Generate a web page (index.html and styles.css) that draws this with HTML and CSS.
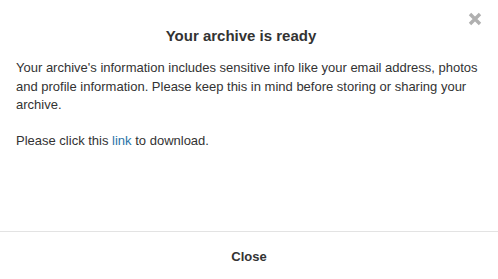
FILE: index.html
```html
<!DOCTYPE html>
<html>
<head>
<meta charset="utf-8">
<link rel="stylesheet" href="styles.css">
</head>
<body>
<div class="dialog">
  <button class="close-x" aria-label="Close">
    <svg width="14" height="14" viewBox="0 0 14 14"><path d="M2 2 L12 12 M12 2 L2 12" stroke="#b0b0b0" stroke-width="3.4" stroke-linecap="butt"/></svg>
  </button>
  <div class="body">
    <h1 class="title">Your archive is ready</h1>
    <p class="text">Your archive's information includes sensitive info like your email address, photos and profile information. Please keep this in mind before storing or sharing your archive.</p>
    <p class="text">Please click this <a href="#" class="link">link</a> to download.</p>
  </div>
  <div class="footer">
    <button class="close-btn">Close</button>
  </div>
</div>
</body>
</html>
```

FILE: styles.css
```css
html, body {
  margin: 0;
  padding: 0;
  background: #fff;
}
body {
  font-family: "Liberation Sans", Arial, sans-serif;
  color: #333;
}
.dialog {
  position: relative;
  width: 498px;
  height: 279px;
  display: flex;
  flex-direction: column;
}
.close-x {
  position: absolute;
  top: 12px;
  right: 16px;
  border: 0;
  background: none;
  padding: 0;
  width: 14px;
  height: 14px;
  cursor: pointer;
}
.close-x svg { display: block; }
.body {
  flex: 1;
  padding: 0 16px;
}
.title {
  margin: 27px 0 14px;
  font-size: 15px;
  font-weight: bold;
  text-align: center;
  line-height: 18px;
  padding-right: 16px;
}
.text {
  margin: 0 0 17px;
  font-size: 13px;
  line-height: 18.6px;
}
.link {
  color: #2a73a8;
  text-decoration: none;
}
.footer {
  border-top: 1px solid #e3e3e3;
  height: 48px;
  display: flex;
  align-items: center;
  justify-content: center;
  padding-top: 1px;
  box-sizing: border-box;
}
.close-btn {
  border: 0;
  background: none;
  font-family: "Liberation Sans", Arial, sans-serif;
  font-size: 13px;
  font-weight: bold;
  color: #333;
  padding: 0;
}
```
